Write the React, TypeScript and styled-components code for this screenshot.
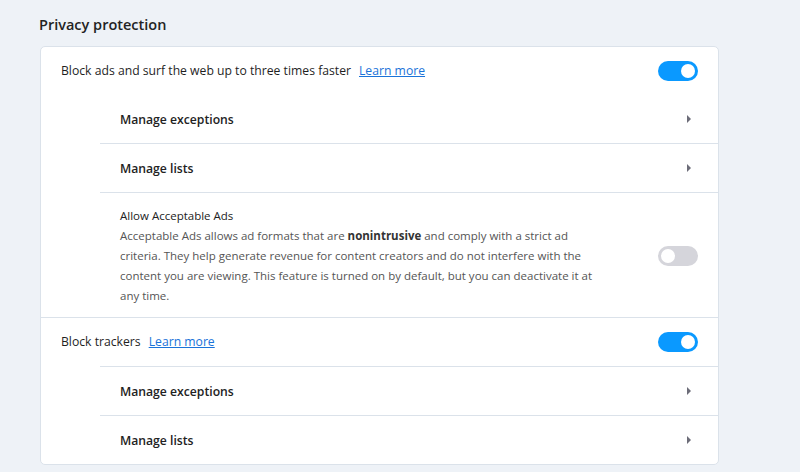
import { FC, ReactNode } from 'react';
import styled, { createGlobalStyle } from 'styled-components';

const GlobalStyle = createGlobalStyle`
  body {
    margin: 0;
    background: #eef2f7;
    font-family: "Open Sans", "Noto Sans", sans-serif;
    color: #1f1f1f;
  }
`;

const SPage = styled.div`
  padding: 15px 0 0 40px;
  width: 679px;
`;

const STitle = styled.h2`
  margin: 0 0 11px -1px;
  font-size: 14.5px;
  font-weight: 600;
  line-height: 20px;
  color: #232323;
`;

const SCard = styled.section`
  background: #fff;
  border: 1px solid #dbe2ea;
  border-radius: 5px;
  overflow: hidden;
`;

const SRow = styled.div<{ $sub?: boolean }>`
  display: flex;
  align-items: center;
  justify-content: space-between;
  min-height: 48px;
  margin-left: ${(p) => (p.$sub ? '59px' : '0')};
  padding: 0 20px;
`;

const SInsetLine = styled.div`
  height: 1px;
  margin-left: 59px;
  background: #dbe2ea;
`;

const SLabel = styled.span`
  font-size: 12.2px;
  line-height: 18px;
`;

const SBold = styled.span`
  font-size: 12.2px;
  font-weight: 600;
  color: #222;
`;

const SLink = styled.a`
  margin-left: 8px;
  font-size: 12.2px;
  color: #1a73d9;
  text-decoration: underline;
  cursor: pointer;
`;

const SToggle = styled.span<{ $on: boolean }>`
  position: relative;
  flex: none;
  width: 40px;
  height: 20px;
  border-radius: 10px;
  background: ${(p) => (p.$on ? '#0a99ff' : '#d5d5db')};

  &::after {
    content: '';
    position: absolute;
    top: 3px;
    left: ${(p) => (p.$on ? '23px' : '3px')};
    width: 14px;
    height: 14px;
    border-radius: 50%;
    background: #fff;
  }
`;

const SArrow = styled.span`
  flex: none;
  width: 0;
  height: 0;
  margin-right: 7px;
  border-top: 4px solid transparent;
  border-bottom: 4px solid transparent;
  border-left: 4px solid #6c6c78;
`;

const SBlock = styled.div`
  display: flex;
  align-items: center;
  justify-content: space-between;
  padding: 13px 20px 11px 79px;
  border-bottom: 1px solid #dbe2ea;
`;

const SBlockText = styled.div`
  width: 488px;
  font-size: 11.5px;
  line-height: 20px;
  color: #555;

  b {
    color: #333;
    font-weight: 700;
  }
`;

const SBlockTitle = styled.div`
  color: #222;
`;

const SubRow: FC<{ children: ReactNode }> = ({ children }) => (
  <SRow $sub>
    <SBold>{children}</SBold>
    <SArrow />
  </SRow>
);

const App = () => (
  <>
    <GlobalStyle />
    <SPage>
      <STitle>Privacy protection</STitle>
      <SCard>
        <SRow>
          <SLabel>
            Block ads and surf the web up to three times faster
            <SLink>Learn more</SLink>
          </SLabel>
          <SToggle $on />
        </SRow>
        <SubRow>Manage exceptions</SubRow>
        <SInsetLine />
        <SubRow>Manage lists</SubRow>
        <SInsetLine />
        <SBlock>
          <SBlockText>
            <SBlockTitle>Allow Acceptable Ads</SBlockTitle>
            Acceptable Ads allows ad formats that are <b>nonintrusive</b> and comply with a
            strict ad criteria. They help generate revenue for content creators and do not
            interfere with the content you are viewing. This feature is turned on by default,
            but you can deactivate it at any time.
          </SBlockText>
          <SToggle $on={false} />
        </SBlock>
        <SRow>
          <SLabel>
            Block trackers
            <SLink>Learn more</SLink>
          </SLabel>
          <SToggle $on />
        </SRow>
        <SInsetLine />
        <SubRow>Manage exceptions</SubRow>
        <SInsetLine />
        <SubRow>Manage lists</SubRow>
      </SCard>
    </SPage>
  </>
);

export default App;
